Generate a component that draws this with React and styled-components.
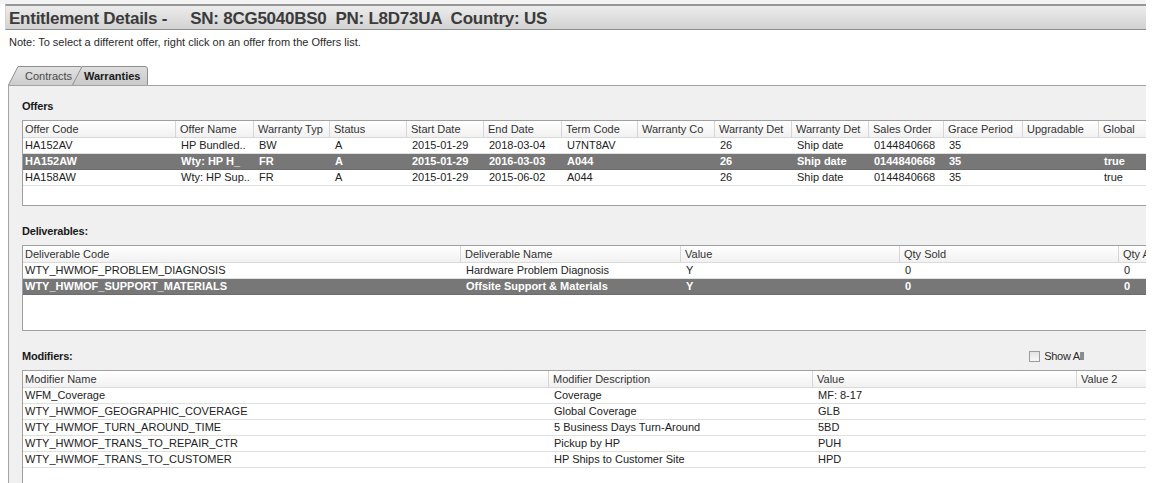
import React from "react";
import styled, { createGlobalStyle } from "styled-components";

const GlobalStyle = createGlobalStyle`
  html, body {
    margin: 0;
    padding: 0;
    background: #ffffff;
    overflow: hidden;
  }
  body {
    font-family: "Liberation Sans", Arial, sans-serif;
    font-size: 11px;
    color: #2a2a2a;
  }
`;

const Window = styled.div`
  width: 1146px;
  height: 483px;
  overflow: hidden;
  background: #ffffff;
`;

const TopStrip = styled.div`
  height: 4px;
  background: #f3f3f3;
`;

const TitleBar = styled.div`
  margin-left: 5px;
  height: 23px;
  border-top: 2px solid #979797;
  border-bottom: 1px solid #8e8e8e;
  border-left: 1px solid #d4d4d4;
  background: linear-gradient(#ececec, #d2d2d2);
  display: flex;
  align-items: center;
  padding-left: 3px;
`;

const Title = styled.h1`
  margin: 0;
  font-size: 17px;
  font-weight: bold;
  color: #3b3b3b;
  white-space: pre;
  line-height: 1;
  letter-spacing: -0.25px;
  padding-top: 1px;
`;

const TitleInfo = styled.span`
  margin-left: 23px;
`;

const Note = styled.div`
  margin: 6px 0 0 9px;
  height: 13px;
  line-height: 13px;
  font-size: 11px;
  color: #2a2a2a;
`;

const TabStrip = styled.div`
  display: flex;
  margin: 17px 0 0 8px;
  height: 19px;
`;

const Tab = styled.div`
  position: relative;
  width: ${({ $w }) => $w}px;
  margin-left: ${({ $overlap }) => ($overlap ? -$overlap : 0)}px;
  padding-left: ${({ $pad }) => $pad}px;
  box-sizing: border-box;
  height: 19px;
  line-height: 20px;
  font-size: 11px;
  font-weight: ${({ $active }) => ($active ? "bold" : "normal")};
  color: ${({ $active }) => ($active ? "#1a1a1a" : "#4a4a4a")};
  z-index: ${({ $active }) => ($active ? 2 : 1)};
`;

const TabShape = styled.svg`
  position: absolute;
  left: 0;
  top: 0;
  z-index: -1;
`;

const TabLabel = styled.span`
  position: relative;
`;

const Panel = styled.div`
  margin-left: 8px;
  border-top: 1px solid #a3a3a3;
  border-left: 1px solid #a3a3a3;
  background: #f0f0f0;
  padding: 13px 0 0 13px;
  height: 400px;
  overflow: hidden;
`;

const Section = styled.section`
  margin-bottom: 18px;
`;

const SectionHead = styled.div`
  display: flex;
  align-items: center;
  justify-content: space-between;
  height: 14px;
  margin-bottom: 7px;
  width: 1124px;
`;

const Label = styled.div`
  font-weight: bold;
  font-size: 11px;
  color: #1a1a1a;
  letter-spacing: -0.2px;
`;

const CheckWrap = styled.label`
  display: flex;
  align-items: center;
  gap: 4px;
  margin-right: 62px;
  font-size: 11px;
  color: #2a2a2a;
  letter-spacing: -0.3px;
`;

const CheckBox = styled.span`
  width: 11px;
  height: 11px;
  box-sizing: border-box;
  border: 1px solid #9c9c9c;
  background: linear-gradient(#e4e4e4, #f8f8f8);
`;

const Table = styled.div`
  width: 1180px;
  height: ${({ $h }) => $h}px;
  box-sizing: border-box;
  border: 1px solid #a0a0a0;
  border-right: none;
  background: #ffffff;
  overflow: hidden;
`;

const HeaderRow = styled.div`
  display: grid;
  grid-template-columns: ${({ $cols }) => $cols};
  height: 16px;
  border-bottom: 1px solid #dadada;
  background: linear-gradient(#ffffff, #f1f1f1);
`;

const HeaderCell = styled.div`
  padding-left: 2px;
  line-height: 16px;
  border-right: 1px solid #d6d6d6;
  color: #333333;
  white-space: nowrap;
  overflow: hidden;
  & + & {
    padding-left: 4px;
  }
`;

const Row = styled.div`
  display: grid;
  grid-template-columns: ${({ $cols }) => $cols};
  height: 16px;
  box-sizing: border-box;
  border-bottom: 1px solid ${({ $selected }) => ($selected ? "#6c6c6c" : "#e0e0e0")};
  background: ${({ $selected }) => ($selected ? "#777777" : "#ffffff")};
  color: ${({ $selected }) => ($selected ? "#ffffff" : "#222222")};
  font-weight: ${({ $selected }) => ($selected ? "bold" : "normal")};
`;

const Cell = styled.div`
  padding-left: 2px;
  line-height: 15px;
  white-space: nowrap;
  overflow: hidden;
  & + & {
    padding-left: 5px;
  }
`;

const offers = {
  widths: [153, 78, 76, 77, 77, 78, 76, 77, 77, 77, 75, 79, 76, 80],
  headers: [
    "Offer Code",
    "Offer Name",
    "Warranty Typ",
    "Status",
    "Start Date",
    "End Date",
    "Term Code",
    "Warranty Co",
    "Warranty Det",
    "Warranty Det",
    "Sales Order",
    "Grace Period",
    "Upgradable",
    "Global",
  ],
  rows: [
    ["HA152AV", "HP  Bundled..", "BW", "A", "2015-01-29", "2018-03-04", "U7NT8AV", "", "26", "Ship date", "0144840668", "35", "", ""],
    ["HA152AW", "Wty: HP H_", "FR", "A", "2015-01-29", "2016-03-03", "A044", "", "26", "Ship date", "0144840668", "35", "", "true"],
    ["HA158AW", "Wty: HP Sup..", "FR", "A", "2015-01-29", "2015-06-02", "A044", "", "26", "Ship date", "0144840668", "35", "", "true"],
  ],
  selected: 1,
  height: 86,
};

const deliverables = {
  widths: [438, 220, 219, 219, 100],
  headers: ["Deliverable Code", "Deliverable Name", "Value", "Qty Sold", "Qty Available"],
  rows: [
    ["WTY_HWMOF_PROBLEM_DIAGNOSIS", "Hardware Problem Diagnosis", "Y", "0", "0"],
    ["WTY_HWMOF_SUPPORT_MATERIALS", "Offsite Support & Materials", "Y", "0", "0"],
  ],
  selected: 1,
  height: 86,
};

const modifiers = {
  widths: [526, 264, 264, 120],
  headers: ["Modifier Name", "Modifier Description", "Value", "Value 2"],
  rows: [
    ["WFM_Coverage", "Coverage", "MF: 8-17", ""],
    ["WTY_HWMOF_GEOGRAPHIC_COVERAGE", "Global Coverage", "GLB", ""],
    ["WTY_HWMOF_TURN_AROUND_TIME", "5 Business Days Turn-Around", "5BD", ""],
    ["WTY_HWMOF_TRANS_TO_REPAIR_CTR", "Pickup by HP", "PUH", ""],
    ["WTY_HWMOF_TRANS_TO_CUSTOMER", "HP Ships to Customer Site", "HPD", ""],
  ],
  selected: -1,
  height: 130,
};

const ListView = ({ data }) => {
  const cols = data.widths.map((w) => `${w}px`).join(" ");
  return (
    <Table $h={data.height}>
      <HeaderRow $cols={cols}>
        {data.headers.map((h, i) => (
          <HeaderCell key={i}>{h}</HeaderCell>
        ))}
      </HeaderRow>
      {data.rows.map((r, i) => (
        <Row key={i} $cols={cols} $selected={i === data.selected}>
          {r.map((c, j) => (
            <Cell key={j}>{c}</Cell>
          ))}
        </Row>
      ))}
    </Table>
  );
};

const tabPath = (w) => `M0.5,19 L10,0.5 L${w - 3},0.5 Q${w - 0.5},0.5 ${w - 0.5},3 L${w - 0.5},19`;

const TabItem = ({ label, w, pad, overlap, active }) => (
  <Tab $w={w} $pad={pad} $overlap={overlap} $active={active}>
    <TabShape width={w} height={19}>
      <defs>
        <linearGradient id={`tg-${label}`} x1="0" y1="0" x2="0" y2="1">
          <stop offset="0" stopColor={active ? "#dedede" : "#e2e2e2"} />
          <stop offset="1" stopColor={active ? "#c9c9c9" : "#cdcdcd"} />
        </linearGradient>
      </defs>
      <path d={tabPath(w)} fill={`url(#tg-${label})`} stroke="#8f8f8f" strokeWidth="1" />
    </TabShape>
    <TabLabel>{label}</TabLabel>
  </Tab>
);

export default function App() {
  return (
    <>
      <GlobalStyle />
      <Window>
        <TopStrip />
        <TitleBar>
          <Title>
            Entitlement Details -
            <TitleInfo>{"SN: 8CG5040BS0  PN: L8D73UA  Country: US"}</TitleInfo>
          </Title>
        </TitleBar>
        <Note>Note: To select a different offer, right click on an offer from the Offers list.</Note>
        <TabStrip>
          <TabItem label="Contracts" w={75} pad={17} />
          <TabItem label="Warranties" w={76} pad={12} overlap={11} active />
        </TabStrip>
        <Panel>
          <Section>
            <SectionHead>
              <Label>Offers</Label>
            </SectionHead>
            <ListView data={offers} />
          </Section>
          <Section>
            <SectionHead>
              <Label>Deliverables:</Label>
            </SectionHead>
            <ListView data={deliverables} />
          </Section>
          <Section>
            <SectionHead>
              <Label>Modifiers:</Label>
              <CheckWrap>
                <CheckBox />
                Show All
              </CheckWrap>
            </SectionHead>
            <ListView data={modifiers} />
          </Section>
        </Panel>
      </Window>
    </>
  );
}
